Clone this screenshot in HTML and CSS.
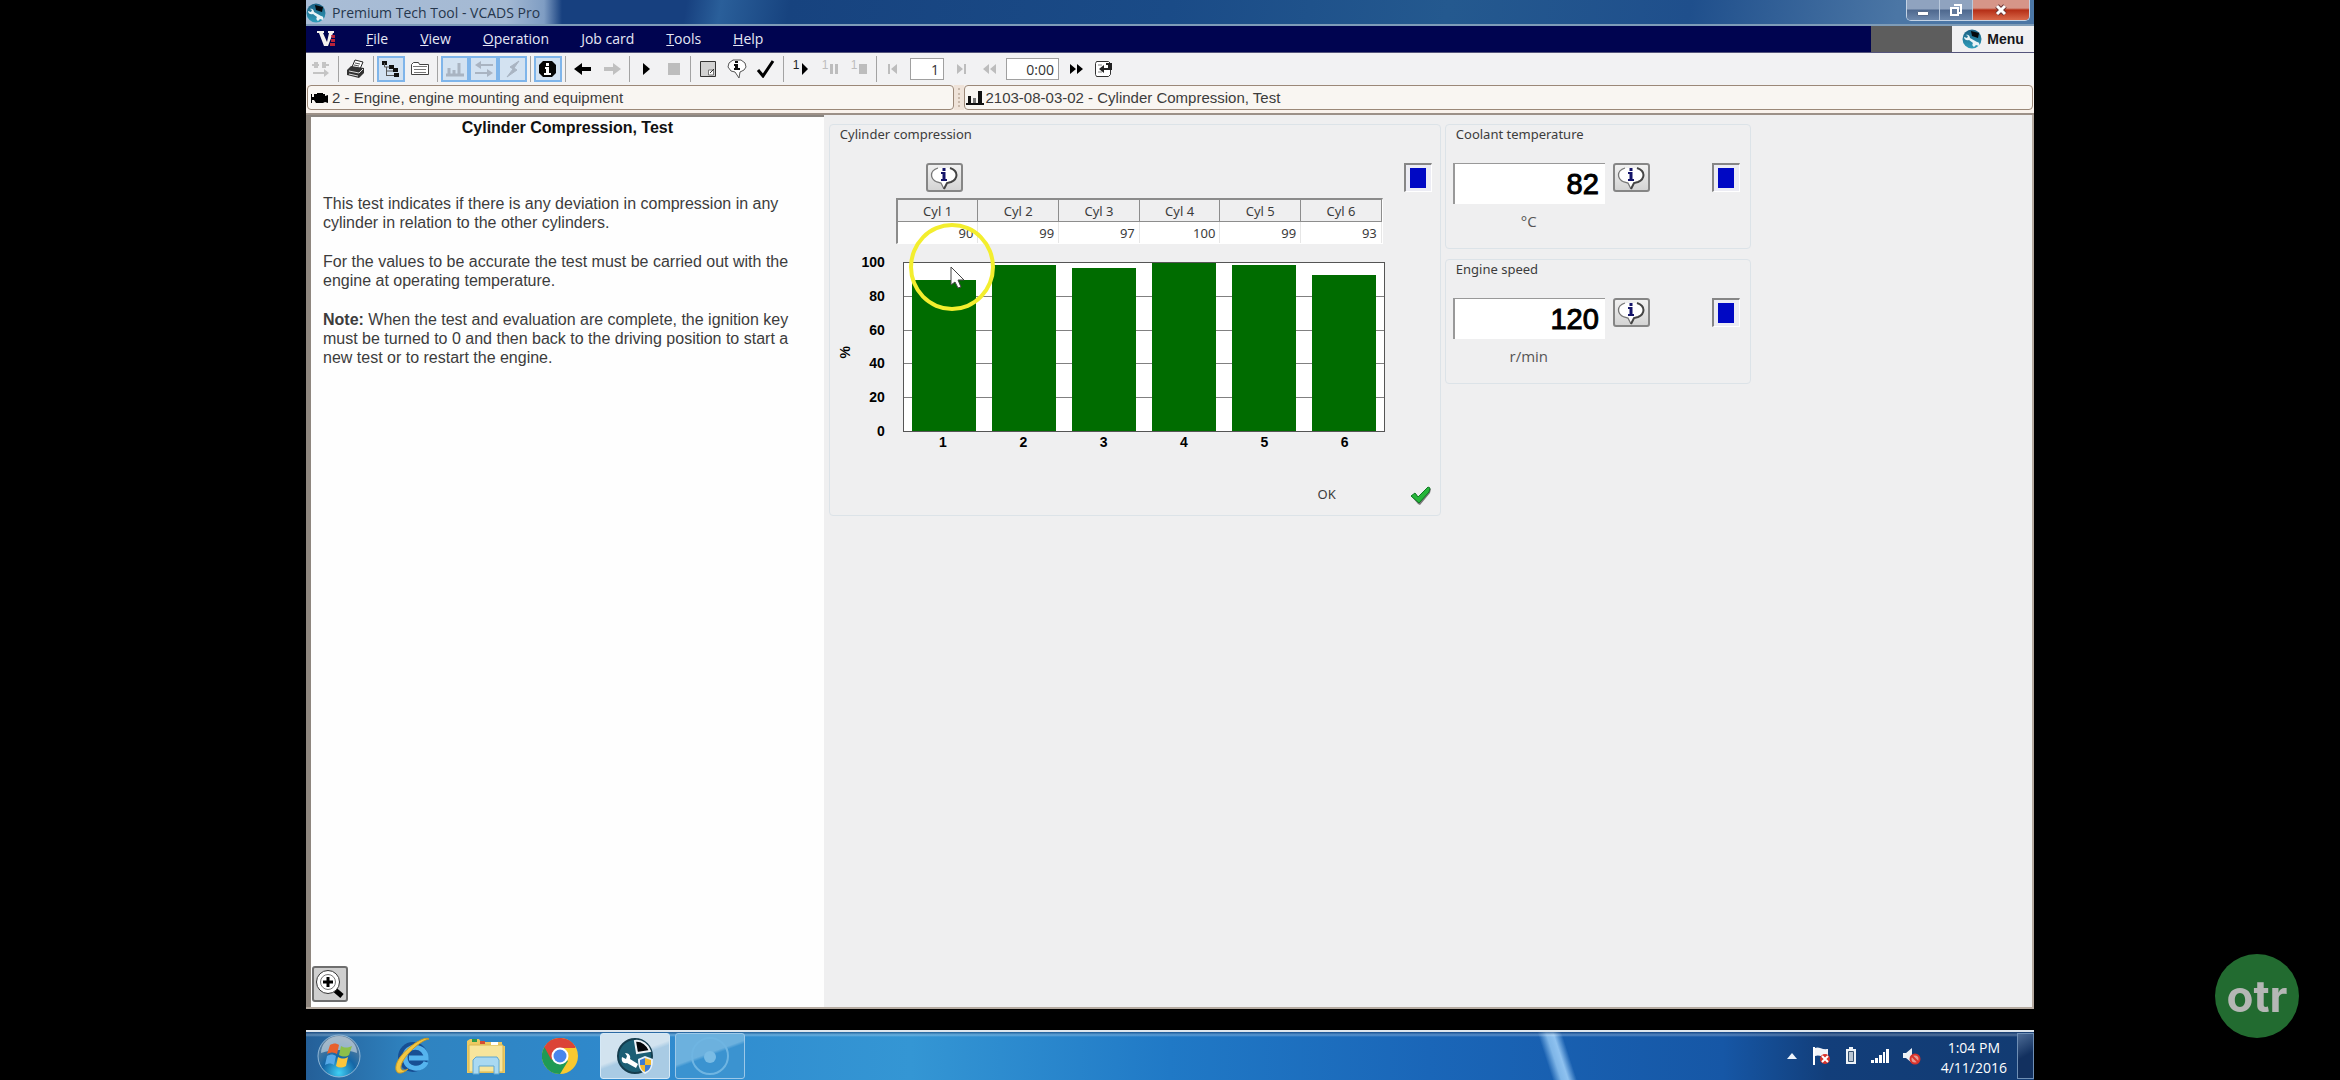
FILE: index.html
```
<!DOCTYPE html>
<html lang="en">
<head>
<meta charset="utf-8">
<title>Premium Tech Tool - VCADS Pro</title>
<link rel="stylesheet" href="styles.css">
</head>
<body>
<svg class="defs" width="0" height="0" aria-hidden="true">
  <defs>
    <linearGradient id="face" x1="0" y1="0" x2="0" y2="1"><stop offset="0" stop-color="#1b5f82"/><stop offset="1" stop-color="#2f9dbb"/></linearGradient>
    <symbol id="ptt" viewBox="0 0 20 20">
      <circle cx="10" cy="10" r="9.5" fill="url(#face)"/>
      <path d="M4 6c2-1 4 1 4 3l7 4c2 0 3 2 2 4l-3-1-2 2c-2-1-2-3-1-4L7 11c-3 1-5-1-5-3l3 1 1-2z" fill="#e9f3f7"/>
      <path d="M9 2l8 2-1 5-6-2z" fill="#05080c"/>
    </symbol>
    <symbol id="bubble" viewBox="0 0 30 24">
      <path d="M10 2C0 4 1 13 8 16l4 1 3 6 3-6 4-1c7-3 8-12-2-14z" fill="#fff"/>
      <path d="M9 2C0 5 1 13 8 16l4 1 3 6" fill="none" stroke="#777" stroke-width="1.3"/>
      <path d="M21 2c9 3 8 11 1 14l-4 1-3 6" fill="none" stroke="#444" stroke-width="2"/>
      <path d="M13.500 2h3v3h-3zM12 6h4.500v7H18v2h-6v-2h1.500V8H12z" fill="#14146a"/>
    </symbol>
  </defs>
</svg>

<div class="app">
  <header class="titlebar">
    <svg class="title-icon"><use href="#ptt"/></svg>
    <h1 class="title">Premium Tech Tool - VCADS Pro</h1>
    <div class="window-buttons">
      <button class="win" aria-label="Minimize"><svg width="14" height="14"><path d="M1.500 8.500h11v4h-11z" fill="#fff" stroke="#566b8a"/></svg></button>
      <button class="win" aria-label="Restore"><svg width="14" height="14" fill="none"><path d="M5 2h7v8H9" stroke="#fff" stroke-width="2"/><path d="M2 5h7v7H2z" fill="#61799c" stroke="#fff" stroke-width="2"/></svg></button>
      <button class="win close" aria-label="Close"><svg width="16" height="14"><path d="M4 3l8 8M12 3l-8 8" stroke="#6b3434" stroke-width="5"/><path d="M4 3l8 8M12 3l-8 8" stroke="#fff" stroke-width="3"/></svg></button>
    </div>
  </header>

  <nav class="menubar">
    <svg class="vlogo" width="20" height="18" aria-hidden="true"><path d="M0 1h7v2L6 3l4 9 2-9h-1V1h6v2h-1L11 16H7L2 3H0z" fill="#f4f1ee"/><path d="M14 5h4v3h-3zM14 9h4v3h-4zM13 13h5v3h-5z" fill="#b8243a"/></svg>
    <a href="#"><u>F</u>ile</a><a href="#"><u>V</u>iew</a><a href="#"><u>O</u>peration</a><a href="#"><u>J</u>ob card</a><a href="#"><u>T</u>ools</a><a href="#"><u>H</u>elp</a>
    <span class="menu-gap"></span>
    <button class="main-menu"><svg width="20" height="20"><use href="#ptt"/></svg>Menu</button>
  </nav>

  <div class="toolbar">
    <div class="tools">
      <button class="tool" aria-label="Connect"><svg width="20" height="18" fill="#c4c4c4" stroke="#c4c4c4"><path d="M1 4h2V2h4v6H3V6H1zM11 2h4v2h3v2h-3v2h-4z" stroke="none"/><path d="M7 5h1M2 13h12" stroke-width="2"/><path d="M13 9l5 4-5 4z" stroke="none"/></svg></button>
    </div>
    <div class="tools">
      <button class="tool" aria-label="Print"><svg width="20" height="20"><path d="M6 8l3-7 8 2-3 7z" fill="#fff" stroke="#222"/><path d="M9 4l5 1M8 6l5 1" stroke="#555"/><path d="M1 11l4-4 13 2v5l-5 5-12-3z" fill="#333"/><path d="M3 12l10 2 4-4M3 15l9 2" fill="none" stroke="#ddd"/></svg></button>
    </div>
    <div class="tools">
      <button class="tool on" aria-label="Tree view"><svg width="20" height="18"><path d="M1 1h5v4H1zM8 5h5v4H8zM12 8h5v4h-5zM13 13h5v4h-5z" fill="#111"/><path d="M3.500 3v4h5M5.500 7v9M6 11h6M6 15.500h7" fill="none" stroke="#555"/></svg></button>
      <button class="tool" aria-label="List"><svg width="20" height="16" fill="none"><path d="M1.500 13.500v-10l2-2h5l1 2h9v10z" fill="#fff" stroke="#444"/><path d="M3 5.500h14M4 8.500h12M4 11.500h12" stroke="#777"/></svg></button>
    </div>
    <div class="tools">
      <button class="tool on" aria-label="Chart"><svg width="20" height="16"><path d="M1 14h18M4 7v7M9 9v5M14 2v12" stroke="#a9b4c2" stroke-width="3"/></svg></button>
      <button class="tool on joined" aria-label="Compare"><svg width="20" height="16"><path d="M5 4h14M1 12h14" stroke="#a9b4c2" stroke-width="2"/><path d="M7 0v8L1 4zM13 8v8l6-4z" fill="#a9b4c2"/></svg></button>
      <button class="tool on joined" aria-label="Activate"><svg width="20" height="18"><path d="M16 1l-9 6 3 2-6 8 10-7-3-2z" fill="#a9b4c2" stroke="#a9b4c2"/></svg></button>
    </div>
    <div class="tools">
      <button class="tool on" aria-label="Information"><svg width="20" height="18"><path d="M5 1h9l4 4v8l-4 4H5l-4-4V5z" fill="#050505"/><path d="M8 3h3v3H8zM7 7h4v6h2v2H6v-2h2V9H7z" fill="#fff"/></svg></button>
    </div>
    <div class="tools">
      <button class="tool" aria-label="Back"><svg width="20" height="14"><path d="M1 7l8-6v4h9v4H9v4z"/></svg></button>
      <button class="tool" aria-label="Forward"><svg width="20" height="14"><path d="M19 7l-8-6v4H2v4h9v4z" fill="#c0c0c0"/></svg></button>
    </div>
    <div class="tools tight">
      <button class="tool" aria-label="Play"><svg width="8" height="14"><path d="M1 1l7 6-7 6z"/></svg></button>
      <button class="tool" aria-label="Stop"><svg width="12" height="12"><path d="M0 0h12v12H0z" fill="#bdbdbd"/></svg></button>
    </div>
    <div class="tools">
      <button class="tool" aria-label="Note"><svg width="18" height="18" fill="none"><path d="M1.500 1.500h15v15h-15z" fill="#d2d2d2" stroke="#333"/><path d="M9.500 15v-5h5v5z" fill="#fff" stroke="#777"/><path d="M11 13l4-4" stroke="#333"/></svg></button>
      <button class="tool" aria-label="Help bubble"><svg width="20" height="20"><path d="M6 1h8l4 3 1 4-2 3-4 2-1 6-4-6-4-1-3-4 1-4z" fill="#fff" stroke="#555"/><path d="M8 2h3v2H8zM7 5h4v4h2v2H7V9h1V7H7z" fill="#111"/></svg></button>
      <button class="tool" aria-label="Confirm"><svg width="20" height="18"><path d="M2 10l5 6L17 1" fill="none" stroke="#000" stroke-width="3"/></svg></button>
    </div>
    <div class="tools">
      <button class="tool step" aria-label="Step play"><sup>1</sup><svg width="8" height="12"><path d="M1 0l6 6-6 6z"/></svg></button>
      <button class="tool step off" aria-label="Step pause"><sup>1</sup><svg width="8" height="10"><path d="M0 0h3v10H0zM5 0h3v10H5z"/></svg></button>
      <button class="tool step off" aria-label="Step stop"><sup>1</sup><svg width="8" height="10"><path d="M0 0h8v10H0z"/></svg></button>
    </div>
    <div class="tools tight">
      <button class="tool" aria-label="First"><svg width="12" height="12"><path d="M1 1h2v10H1zM10 1v10L4 6z" fill="#bdbdbd"/></svg></button>
      <input class="field page" type="text" value="1" aria-label="Page">
      <button class="tool" aria-label="Last"><svg width="12" height="12"><path d="M9 1h2v10H9zM2 1v10l6-5z" fill="#bdbdbd"/></svg></button>
      <button class="tool" aria-label="Rewind"><svg width="14" height="12"><path d="M7 1v10L1 6zM14 1v10L8 6z" fill="#bdbdbd"/></svg></button>
      <input class="field clock" type="text" value="0:00" aria-label="Time">
      <button class="tool" aria-label="Fast forward"><svg width="14" height="12"><path d="M1 1v10l6-5zM8 1v10l6-5z"/></svg></button>
      <button class="tool" aria-label="Return"><svg width="20" height="18"><path d="M2.500 1.500h12l2 2v11l-2 2h-12l-1-2v-11z" fill="#fff" stroke="#333"/><path d="M4 5h4M4 12h4" stroke="#888"/><path d="M5 9l5-4v3h4V5h-2V3h6v7h-8v3z" fill="#222"/></svg></button>
    </div>
  </div>

  <div class="crumbs">
    <div class="crumb"><svg width="17" height="14"><path d="M0 3h1v3h2V3h3V2h6v1h2v2l3-1v8l-3-1-2 1H5L3 9H1v3H0z"/></svg>2 - Engine, engine mounting and equipment</div>
    <div class="grip"></div>
    <div class="crumb"><svg width="18" height="14"><path d="M0 12h18v2H0zM2 5h3v7H2zM12 0h4v12h-4z" fill="#111"/><path d="M7 7h3v5H7z" fill="#777"/></svg>2103-08-03-02 - Cylinder Compression, Test</div>
  </div>

  <main class="work">
    <section class="info">
      <h2>Cylinder Compression, Test</h2>
      <div class="copy">
        <p>This test indicates if there is any deviation in compression in any cylinder in relation to the other cylinders.</p>
        <p>For the values to be accurate the test must be carried out with the engine at operating temperature.</p>
        <p><b>Note:</b> When the test and evaluation are complete, the ignition key must be turned to 0 and then back to the driving position to start a new test or to restart the engine.</p>
      </div>
      <button class="zoom" aria-label="Zoom in"><svg width="30" height="30" fill="none"><path d="M20 21l7 6" stroke="#000" stroke-width="5"/><circle cx="13" cy="13" r="11.500" fill="#fff" stroke="#333"/><circle cx="13" cy="13" r="7.500" stroke="#777"/><path d="M13 8v10M8 13h10" stroke="#000" stroke-width="3"/></svg></button>
    </section>

    <div class="meters">
      <section class="group compression">
        <h3>Cylinder compression</h3>
        <div class="group-head">
          <button class="help" aria-label="About cylinder compression"><svg width="30" height="24"><use href="#bubble"/></svg></button>
          <span class="led"></span>
        </div>
        <table class="values">
          <thead><tr><th>Cyl 1</th><th>Cyl 2</th><th>Cyl 3</th><th>Cyl 4</th><th>Cyl 5</th><th>Cyl 6</th></tr></thead>
          <tbody><tr><td>90</td><td>99</td><td>97</td><td>100</td><td>99</td><td>93</td></tr></tbody>
        </table>
        <div class="chart">
          <span class="unit-axis">%</span>
          <div class="scale"><span>100</span><span>80</span><span>60</span><span>40</span><span>20</span><span>0</span></div>
          <div class="plot-wrap">
            <div class="plot">
              <div class="lines"><i></i><i></i><i></i><i></i><i></i></div>
              <div class="bars">
                <div class="bar" style="height:90%"></div><div class="bar" style="height:99%"></div><div class="bar" style="height:97%"></div><div class="bar" style="height:100%"></div><div class="bar" style="height:99%"></div><div class="bar" style="height:93%"></div>
              </div>
              <div class="halo"></div>
              <svg class="pointer" width="16" height="24"><path d="M1 1v18l4-3 3 6 3-1-3-7h6z" fill="#fff" stroke="#444"/></svg>
            </div>
            <div class="cats"><span>1</span><span>2</span><span>3</span><span>4</span><span>5</span><span>6</span></div>
          </div>
        </div>
        <div class="result"><span class="verdict">OK</span><svg width="22" height="20"><path d="M2 11l4-3 3 4L18 2l3 1-1 4-10 12-2-1z" fill="#777"/><path d="M1 10l4-3 3 4L18 1l2 1-1 4L9 17z" fill="#27b63a" stroke="#0f7a24"/></svg></div>
      </section>

      <div class="readouts">
        <section class="group readout">
          <h3><label for="coolant">Coolant temperature</label></h3>
          <div class="reading">
            <input class="value" id="coolant" type="text" value="82" readonly>
            <button class="help" aria-label="About coolant temperature"><svg width="30" height="24"><use href="#bubble"/></svg></button>
            <span class="led"></span>
          </div>
          <p class="unit">°C</p>
        </section>
        <section class="group readout">
          <h3><label for="speed">Engine speed</label></h3>
          <div class="reading">
            <input class="value" id="speed" type="text" value="120" readonly>
            <button class="help" aria-label="About engine speed"><svg width="30" height="24"><use href="#bubble"/></svg></button>
            <span class="led"></span>
          </div>
          <p class="unit">r/min</p>
        </section>
      </div>
    </div>
  </main>

  <footer class="taskbar">
    <div class="apps">
      <button class="start" aria-label="Start"><svg width="44" height="44"><defs><radialGradient id="orb" cx=".5" cy=".9" r=".8"><stop offset="0" stop-color="#3fd0f5"/><stop offset=".5" stop-color="#1566a6"/><stop offset="1" stop-color="#5f7f9c"/></radialGradient></defs><circle cx="22" cy="22" r="21" fill="url(#orb)" stroke="#8fb6d6"/><path d="M4 19a18 17 0 0 1 36 0c-10-4-25-4-36 0z" fill="#d4dfe8" opacity=".6"/><path d="M13 11c4-2 6-2 9 0l-2 9c-3-2-6-2-10 0z" fill="#e8602c"/><path d="M24 12c4 2 6 2 11 0l-3 9c-3 2-6 2-10 0z" fill="#8cc04a"/><path d="M10 22c4-2 6-2 9 0l-2 9c-3-2-5-2-9 0z" fill="#56a9e8"/><path d="M21 23c4 2 6 2 10 0l-2 9c-4 2-7 2-10 0z" fill="#fbc63c"/></svg></button>
      <button class="pin" aria-label="Internet Explorer"><svg width="42" height="40" fill="none"><circle cx="22" cy="21" r="15" fill="#174f94"/><path d="M35 26c-3 9-21 9-21-5 0-13 21-13 21 1H18" stroke="#55b4ee" stroke-width="5"/><path d="M38 3c-5-5-36 17-33 31 2 6 9 2 12-1-4 2-8 2-7-3C12 20 30 4 38 3z" fill="#f2c744" stroke="#c79a24"/></svg></button>
      <button class="pin" aria-label="Explorer"><svg width="40" height="38"><path d="M1 4l3-2h9l2 3h21v4h3v27H1z" fill="#edc962"/><path d="M3 8h34v27H3z" fill="#f7e59c" stroke="#d9b650"/><path d="M6 2h5v3H6z" fill="#2f9a48"/><path d="M14 4h5v3h-5z" fill="#d74c32"/><path d="M25 5h7v3h-7z" fill="#fff"/><path d="M7 37V23l3-3h21l2 3v14h-5v-8H13v8z" fill="#a9d9f2" stroke="#5fa6cf"/></svg></button>
      <button class="pin" aria-label="Chrome"><svg width="36" height="36"><circle cx="18" cy="18" r="18" fill="#f9c92f"/><path d="M18 18L2.400 9A18 18 0 0 0 18 36l8-13z" fill="#1f9a55"/><path d="M18 18L2.400 9A18 18 0 0 1 33.600 9H18z" fill="#db4437"/><path d="M2.400 9l7 13L18 10h15.600A18 18 0 0 0 2.400 9z" fill="#db4437"/><circle cx="18" cy="18" r="8.500" fill="#fff"/><circle cx="18" cy="18" r="6.500" fill="#4a86ec"/></svg></button>
      <button class="task active" aria-label="Premium Tech Tool"><svg width="38" height="38"><circle cx="19" cy="19" r="17" fill="#1c5f75" stroke="#153d4e" stroke-width="2"/><path d="M9 16c4 0 6 3 5 6l8 5-2 4-9-5c-4 1-6-2-5-6l4 2 1-3z" fill="#fff"/><path d="M19 4c7-1 13 4 15 10l-13 2z" fill="#05070a" stroke="#eef4f8" stroke-width="2"/><path d="M22 22l7-3 8 3c0 8-2 12-8 15-5-3-7-7-7-15z" fill="#e6f0fa"/><path d="M24 23l5-2v7h-5zM29 28h6c-1 4-3 6-6 7z" fill="#3b7bd1"/><path d="M29 21l6 2v5h-6zM24 28h5v7c-3-1-4-3-5-7z" fill="#f2b92e"/></svg></button>
      <button class="task" aria-label="Recorder"><svg width="40" height="40" fill="none"><circle cx="20" cy="20" r="18" stroke="#6fb5e2" stroke-width="2"/><circle cx="20" cy="21" r="6" fill="#7abce5"/></svg></button>
    </div>
    <div class="tray">
      <svg width="10" height="6"><path d="M0 6l5-6 5 6z" fill="#eef4fb"/></svg>
      <svg width="18" height="20"><path d="M1 1v18" stroke="#fff" stroke-width="2"/><path d="M2 2c4-2 6 2 13 1v8C9 12 7 8 2 10z" fill="#f2f4f8"/><circle cx="12" cy="13" r="5" fill="#d9332b"/><path d="M9 10l6 6M15 10l-6 6" stroke="#fff" stroke-width="2"/></svg>
      <svg width="12" height="18"><path d="M4 0h4v2h3v15H1V2h3z" fill="#eef3f8"/><path d="M3.500 4.500h5v10h-5z" fill="#b9c5d2" stroke="#35506e"/></svg>
      <svg width="18" height="14" fill="#fff"><path d="M0 11h3v3H0zM4 9h3v5H4zM8 6h3v8H8zM12 3h2v11h-2zM15 0h3v14h-3z"/></svg>
      <svg width="18" height="18" fill="none"><path d="M0 6h3l6-5v15l-6-5H0z" fill="#eef2f6"/><circle cx="12" cy="12" r="4.500" fill="#e99a92" stroke="#d9332b" stroke-width="2"/><path d="M9 9l6 6" stroke="#d9332b" stroke-width="2"/></svg>
      <div class="datetime"><span>1:04 PM</span><span>4/11/2016</span></div>
      <button class="peek" aria-label="Show desktop"></button>
    </div>
  </footer>
</div>
<div class="badge">otr</div>
</body>
</html>
```

FILE: styles.css
```
* { box-sizing: border-box; }
body {
  margin: 0;
  padding: 0 306px;
  background: #000;
  color: #3c3c3c;
  font: 16px/20px "Liberation Sans", Arial, sans-serif;
}
h1, h2, h3, p { margin: 0; font-weight: 400; }
button, input { font: inherit; color: inherit; margin: 0; padding: 0; }
button { border: 0; background: none; display: flex; align-items: center; justify-content: center; flex: none; }
svg { display: block; flex: none; }
.defs { position: absolute; }
.app { min-height: 100vh; display: flex; flex-direction: column; }

/* title bar */
.titlebar {
  height: 26px;
  display: flex;
  align-items: flex-start;
  border-bottom: 2px solid #7e9cb8;
  background:
    linear-gradient(90deg, #a9bdd6 0, #a4b9d3 200px, #7f9dc3 238px, transparent 256px),
    linear-gradient(100deg, #17407f 22%, #2a5f9a 24%, #17437f 28%, #1a4b87 50%, #24598f 66%, #1f4f8c 80%, #4b76a5 92%);
}
.title-icon { width: 20px; height: 20px; margin: 3px 6px 0 0; }
.title { flex: 1; font: 14px/26px "Open Sans", sans-serif; color: #26374d; }
.window-buttons { display: flex; margin-right: 4px; border: 1px solid #c3d2e4; border-top: 0; border-radius: 0 0 5px 5px; overflow: hidden; }
.win { width: 33px; height: 20px; background: linear-gradient(#8fa3bf 45%, #4e688e 50%, #6d88ac); border-right: 1px solid #b9c9dc; }
.win.close { width: 56px; border: 0; background: linear-gradient(#d69588 40%, #b52e16 50%, #d9694a); }

/* menu bar */
.menubar { height: 27px; display: flex; align-items: center; gap: 32px; padding-left: 11px; background: #000450; border-bottom: 1px solid #55557c; }
.menubar a { font: 500 14px/24px "Open Sans", sans-serif; color: #e6e8f6; text-decoration: none; }
.vlogo { margin-right: -3px; }
.menu-gap { margin: 0 -32px 0 auto; width: 81px; align-self: stretch; background: #5d5d5d; }
.main-menu { align-self: stretch; width: 82px; gap: 5px; background: #f0f0f2; color: #16161a; font-weight: 700; font-size: 14px; }

/* toolbar */
.toolbar { height: 32px; display: flex; align-items: center; background: #f2f2f3; }
.tools { height: 26px; display: flex; align-items: center; gap: 1px; padding: 0 3px; border-left: 1px solid #a3a3a3; }
.tools:first-child { border: 0; padding-left: 1px; }
.tools.tight { gap: 0; padding: 0 2px; }
.tool { width: 28px; height: 26px; }
.tool.on { background: #d3e2f1; border: 2px solid #7fb5ea; }
.tool.joined { margin-left: -1px; width: 29px; }
.tool.step { gap: 2px; color: #222; }
.tool.step sup { font-size: 12px; line-height: 18px; align-self: flex-start; }
.tool.off { color: #bdbdbd; fill: #bdbdbd; }
.field { height: 22px; border: 1px solid #a0a0a0; background: #fff; text-align: right; padding-right: 4px; font: 14px/20px "Open Sans", sans-serif; color: #333; }
.page { width: 34px; margin: 0 3px; }
.clock { width: 53px; margin: 0 3px; }

/* location strip */
.crumbs { display: flex; height: 30px; padding: 0 1px 3px; background: #f9f2ec; border-bottom: 2px solid #9c9087; font-size: 15px; }
.crumb { flex: 1069 1 0; display: flex; align-items: center; gap: 4px; padding-left: 3px; line-height: 22px; border: 1px solid #9b8878; border-radius: 4px; background: #f9f6f2; }
.crumb:first-child { flex: 643 1 0; }
.crumb:last-child { padding-left: 1px; gap: 2px; }
.grip { width: 10px; background: #efe3d9; display: flex; }
.grip::after { content: ""; margin: 3px auto; border-left: 2px dotted #c9b9ab; }

/* work area */
.work { flex: 1; display: grid; grid-template-columns: 30fr 70fr; background: #efeff0; border: solid #b5aaa0; border-width: 0 2px 2px 0; }
.info { display: flex; flex-direction: column; background: #fefefe; border-left: 5px solid #8f877f; border-top: 2px solid #8a8580; padding: 0 1px 5px; }
.info h2 { text-align: center; font-size: 16px; font-weight: 700; line-height: 22px; color: #111; }
.copy { padding: 55px 24px 0 11px; flex: 1; display: flex; flex-direction: column; gap: 20px; line-height: 19px; }
.zoom { width: 36px; height: 36px; border: 2px solid #6e6e6e; border-radius: 3px; background: #cfcfcf; }

.meters { display: flex; align-items: flex-start; gap: 4px; padding: 9px 5px; font: 14px/18px "Noto Sans", sans-serif; }
.group { border: 1px solid #dce3e8; border-radius: 4px; }
.group h3 { font: 13px/18px "Noto Sans", sans-serif; padding-left: 10px; }
.compression { width: 612px; height: 392px; padding: 0 8px 8px; }
.compression h3 { padding-left: 2px; }
.group-head { display: flex; justify-content: space-between; margin: 20px 0 6px 88px; }
.help { width: 37px; height: 29px; border: 2px solid #868686; border-radius: 3px; background: linear-gradient(#f1f1f1, #d4d4d4); }
.led { width: 28px; height: 29px; border: solid; border-width: 2px 1px 1px 2px; border-color: #868686 #fff #fff #868686; background: linear-gradient(#0008c4, #0008c4) center / 16px 20px no-repeat #ececf4; }
.values { width: 487px; margin-left: 58px; table-layout: fixed; border-collapse: separate; border-spacing: 0; border: solid; border-width: 2px 1px 1px 2px; border-color: #8b8b8b #fff #fff #8b8b8b; }
.values th { height: 22px; padding: 0; font-size: 13px; font-weight: 400; line-height: 20px; border: solid #8d8d8d; border-width: 0 1px 1px 0; }
.values td { height: 21px; padding: 0 4px 0 0; font-size: 13px; line-height: 20px; text-align: right; background: #fff; border-right: 1px solid #e6e6e6; }

.chart { display: flex; margin-top: 8px; font: 700 14px/20px "Liberation Sans", Arial, sans-serif; color: #000; }
.unit-axis { width: 14px; display: flex; justify-content: center; align-self: center; line-height: 14px; writing-mode: vertical-rl; transform: rotate(180deg); }
.scale { width: 33px; height: 189px; display: flex; flex-direction: column; justify-content: space-between; text-align: right; margin-right: 18px; }
.plot-wrap { width: 482px; padding-top: 10px; }
.plot { position: relative; height: 170px; background: #fff; border: 1px solid #555; }
.lines { position: absolute; inset: 0; display: flex; flex-direction: column; }
.lines i { flex: 1; border-bottom: 1px solid #808080; }
.lines i:last-child { border: 0; }
.bars { position: relative; height: 100%; display: grid; grid-template-columns: repeat(6, 1fr); align-items: end; justify-items: center; }
.bar { width: 80%; background: #006c00; }
.halo { position: absolute; left: 5px; top: -40px; width: 86px; height: 88px; border: 4px solid #f3ee2e; border-radius: 50%; }
.pointer { position: absolute; left: 46px; top: 3px; }
.cats { display: grid; grid-template-columns: repeat(6, 1fr); text-align: center; }
.result { display: flex; justify-content: flex-end; align-items: flex-start; gap: 74px; margin-top: 34px; font-size: 13px; line-height: 16px; }

.readouts { display: flex; flex-direction: column; gap: 10px; }
.readout { width: 306px; height: 125px; }
.reading { display: flex; align-items: flex-start; padding: 20px 10px 0 7px; }
.reading .led { margin-left: auto; }
.value { width: 152px; height: 41px; margin-right: 8px; padding-right: 6px; text-align: right; font: 29px/38px "Liberation Sans", Arial, sans-serif; -webkit-text-stroke: 1px #000; color: #000; background: #fff; border: 0; border-top: 1px solid #999; border-left: 2px solid #999; }
.unit { width: 152px; margin: 8px 0 0 7px; text-align: center; font: 15px/18px "Open Sans", sans-serif; color: #555; }

/* taskbar */
.taskbar {
  height: 50px; margin-top: 21px; display: flex; justify-content: space-between; padding-left: 11px; border-top: 2px solid #dde5ec;
  background:
    linear-gradient(#10356a88, #ffffff44 3px, transparent 5px),
    linear-gradient(72deg, transparent 71.500%, #7fb6e8 72%, #8fc2f0 72.400%, transparent 72.900%),
    linear-gradient(90deg, #245f98 0, #2f83c0 6%, #2f8ace 20%, #3496d4 35%, #2079c6 50%, #1a66b8 65%, #1657a6 82%, #123e7a 88%, #123b72 100%);
}
.apps { display: flex; align-items: center; }
.start { width: 44px; }
.pin { width: 74px; }
.start + .pin { margin-left: 14px; }
.task { width: 70px; height: 46px; margin-left: 5px; border: 1px solid #9cc8e8; border-radius: 3px; background: linear-gradient(160deg, #6cb1de 45%, #3b93d0 50%); }
.task.active { margin-left: 3px; border-color: #d5e9f7; background: linear-gradient(160deg, #d2e3ef 45%, #a9cbe4 52%); }
.tray { display: flex; align-items: center; gap: 18px; }
.tray svg + svg { margin-left: -4px; }
.tray svg:first-child + svg { margin-left: -2px; }
.datetime { display: flex; flex-direction: column; align-items: center; font: 14px/20px "Open Sans", sans-serif; color: #fff; margin: 3px 0 0 2px; }
.peek { width: 17px; height: 46px; margin-left: -8px; border: 1px solid #6f8fb5; background: linear-gradient(150deg, #4d6c96, #12305f 50%); }

.badge { position: fixed; right: 41px; bottom: 42px; width: 84px; height: 84px; border-radius: 50%; background: #226b30; color: #b5b7b5; font: 700 44px/84px Inter, sans-serif; text-align: center; }
```
